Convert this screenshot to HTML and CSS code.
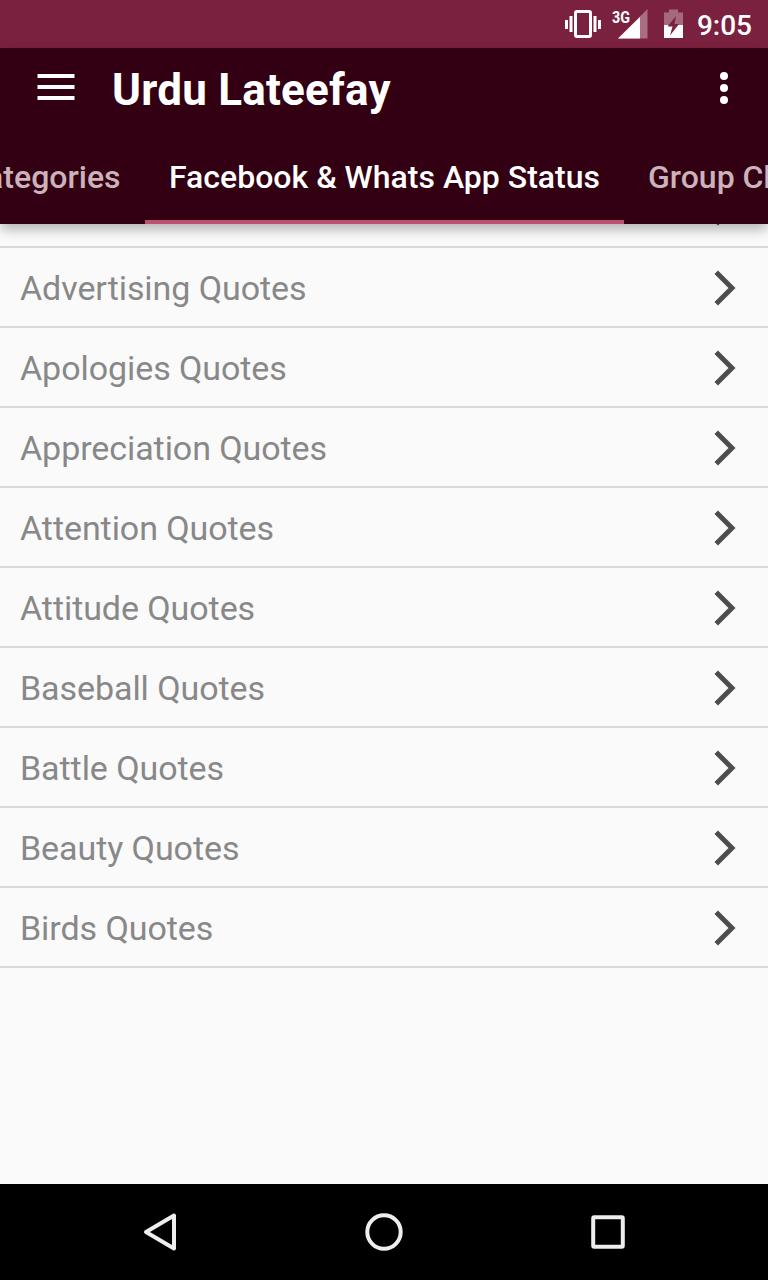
FILE: index.html
```html
<!DOCTYPE html>
<html lang="en">
<head>
<meta charset="utf-8">
<title>Urdu Lateefay</title>
<link rel="stylesheet" href="styles.css">
</head>
<body>
<svg class="defs" aria-hidden="true"><symbol id="chevron" viewBox="0 0 24 40"><path d="M3.200 4.200 19 20 3.200 35.800" fill="none" stroke="#4d4d4d" stroke-width="5"/></symbol></svg>
<div class="screen">
  <div class="statusbar">
    <svg class="status-icons" width="128" height="48" viewBox="560 0 128 48">
      <g fill="#fff">
        <path d="M565 20h3v9h-3zM569.500 16h3v16h-3zM598 20h3v9h-3zM593.500 16h3v16h-3z"/>
        <rect x="575.500" y="11.500" width="15" height="25" rx="1.500" fill="none" stroke="#fff" stroke-width="3"/>
        <path d="M618 38.500 647.500 9v29.500z" opacity=".35"/>
        <path d="M618 38.500 640 17v21.500z"/>
        <path d="M664 12.500h5V9.500h9v3h5V25H664z" opacity=".32"/>
        <path d="M664 25h19v13h-19z"/>
      </g>
      <path d="M676 16 667.500 26.500h5l-2.500 9L679 24h-4.500z" fill="#7b2140"/>
      <text class="network" x="612" y="23" textLength="18" lengthAdjust="spacingAndGlyphs">3G</text>
    </svg>
    <span class="clock">9:05</span>
  </div>
  <header class="appbar">
    <div class="toolbar">
      <svg class="menu" width="38" height="28" viewBox="0 0 38 28"><path d="M0.500 2h37M0.500 13h37M0.500 24h37" stroke="#fff" stroke-width="4"/></svg>
      <h1 class="title">Urdu Lateefay</h1>
      <svg class="more" width="8" height="32" viewBox="0 0 8 32" fill="#fff"><circle cx="4" cy="4" r="4"/><circle cx="4" cy="16" r="4"/><circle cx="4" cy="28" r="4"/></svg>
    </div>
    <nav class="tabs">
      <span class="tab tab-first">Categories</span>
      <span class="tab tab-active">Facebook &amp; Whats App Status</span>
      <span class="tab tab-last">Group Chat</span>
    </nav>
  </header>
  <main class="list">
    <div class="row row-clipped"><svg class="chevron"><use href="#chevron"/></svg></div>
    <div class="row"><span>Advertising Quotes</span><svg class="chevron"><use href="#chevron"/></svg></div>
    <div class="row"><span>Apologies Quotes</span><svg class="chevron"><use href="#chevron"/></svg></div>
    <div class="row"><span>Appreciation Quotes</span><svg class="chevron"><use href="#chevron"/></svg></div>
    <div class="row"><span>Attention Quotes</span><svg class="chevron"><use href="#chevron"/></svg></div>
    <div class="row"><span>Attitude Quotes</span><svg class="chevron"><use href="#chevron"/></svg></div>
    <div class="row"><span>Baseball Quotes</span><svg class="chevron"><use href="#chevron"/></svg></div>
    <div class="row"><span>Battle Quotes</span><svg class="chevron"><use href="#chevron"/></svg></div>
    <div class="row"><span>Beauty Quotes</span><svg class="chevron"><use href="#chevron"/></svg></div>
    <div class="row"><span>Birds Quotes</span><svg class="chevron"><use href="#chevron"/></svg></div>
  </main>
  <footer class="navbar">
    <svg width="40" height="40" viewBox="140 1212 40 40"><path d="M174 1215.500v33L146 1232z"/></svg>
    <svg width="40" height="40" viewBox="364 1212 40 40"><circle cx="384" cy="1232" r="16.700"/></svg>
    <svg width="40" height="40" viewBox="588 1212 40 40"><rect x="593.200" y="1217.200" width="29.600" height="29.600" rx="1"/></svg>
  </footer>
</div>
</body>
</html>
```
FILE: styles.css
```css
* { box-sizing: border-box; }
body { margin: 0; font-family: Roboto, "Liberation Sans", sans-serif; }
svg { display: block; flex: none; }
.defs { display: none; }
.screen { display: flex; flex-direction: column; width: 768px; height: 1280px; overflow: hidden; background: #fafafa; }
.statusbar { display: flex; flex: none; justify-content: flex-end; height: 48px; padding-right: 16px; background: #7b2140; color: #fff; }
.network { font-size: 17px; font-weight: 700; fill: #fff; }
.clock { width: 64px; text-align: right; font-size: 28px; font-weight: 500; line-height: 51px; }
.appbar { z-index: 1; flex: none; height: 176px; background: #320012; box-shadow: 0 6px 12px -1px rgba(0, 0, 0, .3); }
.toolbar { display: flex; align-items: center; height: 80px; padding: 0 40px 0 37px; }
.title { flex: 1; margin: 4px 0 0 37px; color: #fff; font-size: 44px; font-weight: 700; line-height: 52px; letter-spacing: .22px; white-space: nowrap; }
.tabs { display: flex; height: 96px; overflow: hidden; }
.tab { flex: none; height: 96px; font-size: 32px; font-weight: 500; line-height: 98px; text-align: center; white-space: nowrap; color: #cbb2bb; }
.tab-first { display: flex; justify-content: flex-end; width: 145px; padding-right: 24.5px; }
.tab-active { width: 479px; color: #fff; border-bottom: 4px solid #bd5174; }
.tab-last { padding-left: 24px; }
.list { flex: 1; }
.row { display: flex; align-items: center; justify-content: space-between; height: 80px; padding: 2px 31px 0 20px; border-bottom: 2px solid #d9d9d9; color: #888; font-size: 34px; line-height: 44px; letter-spacing: -.07px; }
.row-clipped { align-items: flex-end; justify-content: flex-end; height: 24px; padding-bottom: 18px; overflow: hidden; }
.chevron { width: 24px; height: 40px; }
.navbar { display: flex; flex: none; align-items: center; justify-content: space-between; height: 96px; padding: 0 140px; background: #000; }
.navbar svg { fill: none; stroke: #eee; stroke-width: 4; stroke-linejoin: round; }
```
